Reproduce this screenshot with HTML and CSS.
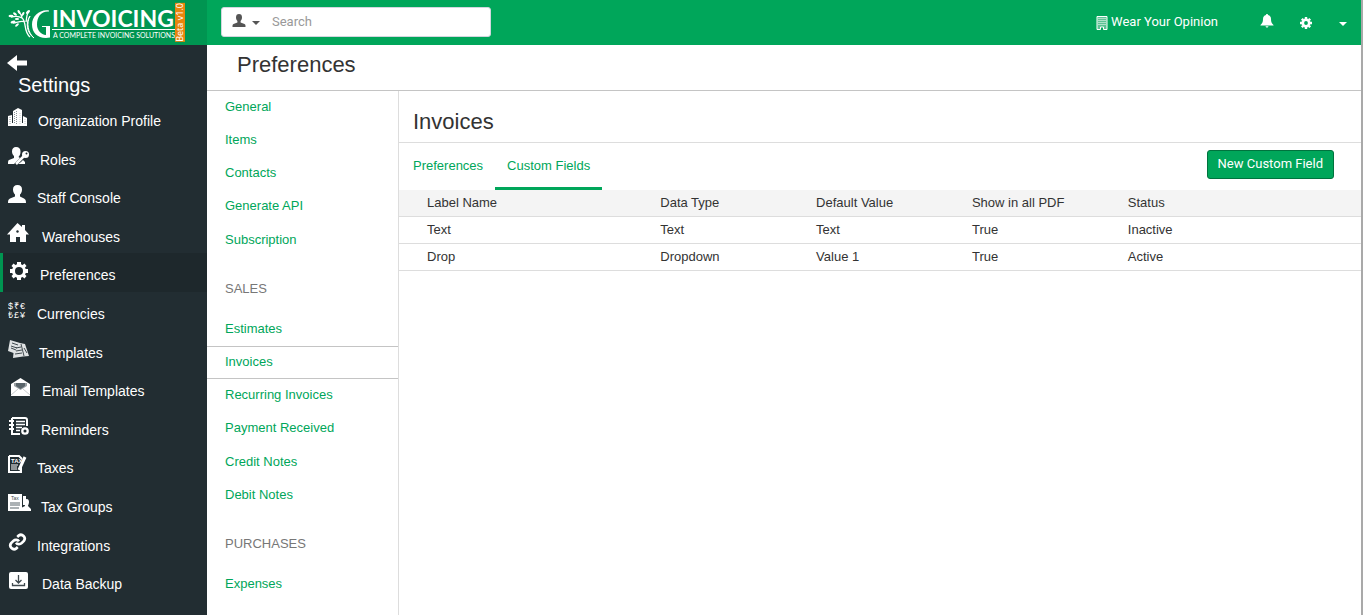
FILE: index.html
```html
<!DOCTYPE html>
<html lang="en">
<head>
  <meta charset="UTF-8">
  <meta name="viewport" content="width=device-width, initial-scale=1.0">
  <title>Preferences</title>
  <link rel="stylesheet" href="styles.css">
</head>
<body>
  <header class="header">
    <a href="#" class="logo">
      <svg class="logo-mark" width="44" height="34" viewBox="0 0 44 34" fill="none" stroke="#fff">
        <path d="M41 5.500C33 5 29 11 29 18.500c0 6 4 10 9 10.500v-8h-4v-1h8v11.500c-11 2-18-4-18-13C24 10 32 3 41 4.500z" fill="#fff" stroke="none"/>
        <path d="M22 10c-4 7-2 17 4 22-7-5-9-15-4-22z" fill="#fff" stroke-width="1"/>
        <path d="M22 31C15 25 19 16 14 12c-3-2-7-2-11-1M17 16c-4-2-8 1-12 1M14 12c0-3-1-4-3-6M18 16c1-4 0-6 2-9" stroke-width="1.300"/>
        <g fill="#fff" stroke="none">
          <ellipse cx="3" cy="10" rx="2.500" ry="1.200"/><ellipse cx="7" cy="8" rx="2.200" ry="1.100" transform="rotate(35 7 8)"/>
          <ellipse cx="11" cy="6" rx="2.200" ry="1.200" transform="rotate(60 11 6)"/><ellipse cx="15" cy="8" rx="2.200" ry="1.100" transform="rotate(-60 15 8)"/>
          <ellipse cx="5" cy="16" rx="2.500" ry="1.200" transform="rotate(-15 5 16)"/><ellipse cx="9" cy="19" rx="2.200" ry="1.100" transform="rotate(-40 9 19)"/>
          <ellipse cx="20" cy="6" rx="2.500" ry="1.300" transform="rotate(-45 20 6)"/><ellipse cx="9" cy="13" rx="2.200" ry="1"/>
        </g>
      </svg>
      <span class="logo-text">
        <span class="logo-name">INVOICING</span>
        <span class="logo-tag">A COMPLETE INVOICING SOLUTIONS</span>
      </span>
      <span class="beta">Beta v1.0</span>
    </a>
    <form class="search">
      <button type="button" class="search-type" aria-label="Search in contacts">
        <svg width="14" height="14" viewBox="0 0 14 14"><path d="M7 0C5 0 4 1 4 3.500c0 1.500.6 2.600 1.400 3.500v1.500L1.500 10C.5 10.500.5 11 .5 13h13c0-2 0-2.500-1-3L8.600 8.500V7C9.400 6.100 10 5 10 3.500 10 1 9 0 7 0z" fill="#555"/></svg>
        <span class="caret"></span>
      </button>
      <input type="text" class="search-input" placeholder="Search" aria-label="Search">
    </form>
    <nav class="top-menu">
      <a href="#" class="company">
        <svg width="12" height="14" viewBox="0 0 12 14"><path d="M1 .5h10v13H7.500V11h-3v2.500H1z" fill="#5cc394" stroke="#fff"/><path d="M3 2v8M5 2v8M7 2v8M9 2v8" stroke="#fff" stroke-dasharray="1 1"/></svg>
        <span>Wear Your Opinion</span>
      </a>
      <a href="#" class="bell" aria-label="Notifications">
        <svg width="14" height="14" viewBox="0 0 14 14"><path d="M7 0c-.7 0-1 .4-1 1C4 1.500 3 3 3 5c0 3-.7 4.500-2.500 6v.5h13V11C11.700 9.500 11 8 11 5c0-2-1-3.500-3-4 0-.6-.3-1-1-1zM5.500 12.300h3C8.300 13.300 7.700 13.500 7 13.500s-1.300-.2-1.500-1.200z" fill="#fff"/></svg>
      </a>
      <a href="#" class="cog" aria-label="Settings">
        <svg width="12" height="12" viewBox="0 0 12 12"><circle cx="6" cy="6" r="3.200" fill="none" stroke="#fff" stroke-width="2.600"/><path d="M6 0v2M6 10v2M0 6h2M10 6h2M1.800 1.800l1.400 1.400M8.800 8.800l1.400 1.400M10.200 1.800L8.800 3.200M3.200 8.800l-1.400 1.400" stroke="#fff" stroke-width="2.400"/></svg>
      </a>
      <a href="#" class="account" aria-label="Account"><span class="caret"></span></a>
    </nav>
  </header>

  <div class="wrapper">
    <aside class="sidebar">
      <a href="#" class="back" aria-label="Back">
        <svg width="20" height="16" viewBox="0 0 20 16"><path d="M0 8L10 0v5.500h10v5H10V16z" fill="#fff"/></svg>
      </a>
      <h2 class="sidebar-title">Settings</h2>
      <ul class="menu">
        <li><a href="#">
          <svg width="20" height="18" viewBox="0 0 20 18"><path d="M0 8l4-1v11H0zM5 3l5-3 4 2v16H5zM15 8l4 2v8h-4zM3 15h14v3H3z" fill="#fff"/><path d="M6.500 4v12M8.500 3v13M2 9v7" stroke="#8b9397" stroke-dasharray="1 1"/><path d="M12 5v11M17 11v5" stroke="#c4c9cb" stroke-dasharray="1 1"/></svg>
          <span>Organization Profile</span></a></li>
        <li><a href="#">
          <svg width="22" height="18" viewBox="0 0 22 18"><path d="M8 0C5.500 0 4 1.500 4 4.500 4 7 5 8 6 9v2l-5 2c-1 .6-1 2-1 4h6l6-6-1.500-1C12 8 12.500 7 12.500 4.500 12.500 1.500 11 0 8 0zM13 15l-3 2h7v-2l-2-2z" fill="#fff"/><circle cx="17.500" cy="7.500" r="3.500" fill="#fff"/><circle cx="18.500" cy="6.500" r="1" fill="#222d32"/><path d="M16 9l-8 8" stroke="#fff" stroke-width="2.500"/></svg>
          <span>Roles</span></a></li>
        <li><a href="#">
          <svg width="19" height="18" viewBox="0 0 19 18"><path d="M9.500 0C6.500 0 5 1.500 5 4.500 5 7 6 8.500 7 9.500v2L2 13.500c-1.500.7-2 2-2 4.500h18c0-2.500-.5-3.800-2-4.500l-4-2v-2c1-1 2-2.500 2-5C14 1.500 12.500 0 9.500 0z" fill="#fff"/></svg>
          <span>Staff Console</span></a></li>
        <li><a href="#">
          <svg class="icon-home" width="24" height="19" viewBox="0 0 24 19"><path d="M9.500-1L14 3V1h3v5l4 4.500h-3V18h-6v-5H8v5H2v-7.500H-1z" fill="#fff"/><circle cx="9.500" cy="7.500" r="1.200" fill="#222d32"/></svg>
          <span>Warehouses</span></a></li>
        <li class="active"><a href="#">
          <svg width="22" height="18" viewBox="0 0 22 18"><circle cx="11" cy="9" r="5.500" fill="none" stroke="#fff" stroke-width="3"/><path d="M9 0h4v3H9zM9 15h4v3H9zM2 7h3v4H2zM17 7h3v4h-3zM3.500 4l2-2.500L8 3.500 5.500 6zM18.500 4l-2-2.500L14 3.500 16.500 6zM3.500 14l2 2.500L8 14.500 5.500 12zM18.500 14l-2 2.500-2.500-2 2.500-2.500z" fill="#fff"/></svg>
          <span>Preferences</span></a></li>
        <li><a href="#">
          <svg class="icon-text" width="19" height="18" viewBox="0 0 19 18"><text x="0" y="8">$</text><text x="6" y="8">₹</text><text x="12" y="8">€</text><text x="0" y="17">₺</text><text x="6" y="17">£</text><text x="12" y="17">¥</text></svg>
          <span>Currencies</span></a></li>
        <li><a href="#">
          <svg width="21" height="18" viewBox="0 0 21 18"><path d="M2 0l10 3 5 1 4 12-6 .5L5 18l.5-5L0 11z" fill="#dfe2e3"/><path d="M4 3l6 2M3 6l6 2M3 8l5 2M8 8l5-1M8 11l6-1M7 14l7-1M13 4l3 12M16 8l3 5" stroke="#414b50" fill="none"/></svg>
          <span>Templates</span></a></li>
        <li><a href="#">
          <svg width="24" height="18" viewBox="0 0 24 18"><path d="M12.500 0L22 6v12H3V6z" fill="#fff"/><path d="M6 5h13v3l-6.500 4L6 8z" fill="#9aa1a4"/><path d="M8 5h9v3l-4.500 3L8 8z" fill="#59646a"/><path d="M3 17l7-6M22 17l-7-6" stroke="#c9cdcf"/></svg>
          <span>Email Templates</span></a></li>
        <li><a href="#">
          <svg width="23" height="18" viewBox="0 0 23 18"><path d="M4 1h13q2 0 2 2v6M4 1v16h8" fill="none" stroke="#fff" stroke-width="2"/><path d="M1 4h5M1 8h5M1 12h5" stroke="#fff" stroke-width="2"/><path d="M8 4.500h9M8 7.500h9M8 10.500h6M8 13.500h4" stroke="#fff" stroke-width="1.500"/><circle cx="17" cy="14" r="2.700" fill="none" stroke="#fff" stroke-width="2.300"/></svg>
          <span>Reminders</span></a></li>
        <li><a href="#">
          <svg class="icon-text tax" width="19" height="18" viewBox="0 0 19 18"><path d="M1 1h10l3 3M1 1v16h12v-5" fill="none" stroke="#fff" stroke-width="2"/><text x="3" y="8">TAX</text><path d="M3 10h7M3 12h6M3 14h6" stroke="#fff"/><path d="M17 2l-6 13" stroke="#fff" stroke-width="3"/></svg>
          <span>Taxes</span></a></li>
        <li><a href="#">
          <svg class="icon-text tax-dark" width="23" height="18" viewBox="0 0 23 18"><path d="M0 0h14v17H0zM15 2h3v9h-3z" fill="#fff"/><text x="3" y="6">Tax</text><path d="M2 9h10M2 11h10M2 14h9" stroke="#59646a"/><path d="M19 5c-2 0-3 1-3 3s1 3 1 4l-4 2v3h10v-2l-3-3c0-1 1-2 1-4s-1-3-2-3z" fill="#fff"/></svg>
          <span>Tax Groups</span></a></li>
        <li><a href="#">
          <svg width="19" height="18" viewBox="0 0 24 24" fill="none" stroke="#fff" stroke-width="3.600"><path d="M10 13a5 5 0 0 0 7.500.5l3-3a5 5 0 0 0-7-7l-1.800 1.700M14 11a5 5 0 0 0-7.500-.5l-3 3a5 5 0 0 0 7 7l1.800-1.700"/></svg>
          <span>Integrations</span></a></li>
        <li><a href="#">
          <svg width="24" height="18" viewBox="0 0 24 18"><rect x="1" y="1" width="19" height="17" rx="2" fill="#fff"/><path d="M10.500 4v8M7.500 9l3 3 3-3M4.500 12v2.500h12V12" fill="none" stroke="#414b50" stroke-width="1.300"/></svg>
          <span>Data Backup</span></a></li>
      </ul>
    </aside>

    <main class="content">
      <h1 class="page-title">Preferences</h1>
      <div class="columns">
        <nav class="subnav">
          <a href="#">General</a>
          <a href="#">Items</a>
          <a href="#">Contacts</a>
          <a href="#">Generate API</a>
          <a href="#">Subscription</a>
          <h4>SALES</h4>
          <a href="#">Estimates</a>
          <a href="#" class="active">Invoices</a>
          <a href="#">Recurring Invoices</a>
          <a href="#">Payment Received</a>
          <a href="#">Credit Notes</a>
          <a href="#">Debit Notes</a>
          <h4>PURCHASES</h4>
          <a href="#">Expenses</a>
        </nav>
        <section class="panel">
          <h2 class="panel-title">Invoices</h2>
          <div class="toolbar">
            <nav class="tabs">
              <a href="#">Preferences</a>
              <a href="#" class="active">Custom Fields</a>
            </nav>
            <button type="button" class="btn">New Custom Field</button>
          </div>
          <table class="fields">
            <thead>
              <tr><th>Label Name</th><th>Data Type</th><th>Default Value</th><th>Show in all PDF</th><th>Status</th></tr>
            </thead>
            <tbody>
              <tr><td>Text</td><td>Text</td><td>Text</td><td>True</td><td>Inactive</td></tr>
              <tr><td>Drop</td><td>Dropdown</td><td>Value 1</td><td>True</td><td>Active</td></tr>
            </tbody>
          </table>
        </section>
      </div>
    </main>
  </div>
</body>
</html>
```
FILE: styles.css
```css
* {
  box-sizing: border-box;
}
body {
  margin: 0;
  height: 100vh;
  display: flex;
  flex-direction: column;
  overflow: hidden;
  border-right: 2px solid #a9a9a9;
  font-family: "Liberation Sans", Arial, sans-serif;
  font-size: 13px;
  line-height: 1.4;
  color: #333;
}
a {
  color: #00a65a;
  text-decoration: none;
}
h1, h2, h4 {
  margin: 0;
  font-weight: 400;
}
svg {
  display: block;
  flex: none;
}

/* header */
.header {
  display: flex;
  align-items: center;
  height: 45px;
  flex: none;
  background-color: #00a65a;
}
.logo {
  display: flex;
  align-items: center;
  width: 207px;
  height: 45px;
  padding-left: 8px;
  background-color: #009551;
  color: #fff;
}
.logo-text {
  display: flex;
  flex-direction: column;
  font-family: Lato, sans-serif;
}
.logo-name {
  font-size: 23px;
  font-weight: 700;
  line-height: 22px;
  border-bottom: 1px solid #fff;
}
.logo-tag {
  padding: 1px 0 0 1px;
  font-size: 7px;
  line-height: 8px;
  white-space: nowrap;
}
.beta {
  background-color: #e8850c;
  font-family: "Noto Sans", sans-serif;
  font-size: 9px;
  line-height: 10px;
  writing-mode: vertical-rl;
  transform: rotate(180deg);
}
.search {
  display: flex;
  width: 270px;
  height: 30px;
  margin: 0 0 1px 14px;
  border: 1px solid #d2d6de;
  border-radius: 3px;
  background-color: #fff;
}
.search-type {
  display: flex;
  align-items: center;
  gap: 6px;
  padding: 0 10px 2px;
  border: none;
  background: none;
  color: #555;
}
.caret {
  margin-top: 3px;
  border-top: 4px solid;
  border-left: 4px solid transparent;
  border-right: 4px solid transparent;
}
.search-input {
  flex: 1;
  min-width: 0;
  padding: 0 2px 2px;
  border: none;
  outline: none;
  background: none;
  font-family: Roboto, sans-serif;
  font-size: 13px;
}
.search-input::placeholder {
  color: #999;
}
.top-menu {
  display: flex;
  align-items: center;
  margin-left: auto;
  padding-right: 14px;
}
.top-menu a {
  color: #fff;
}
.company {
  display: flex;
  align-items: center;
  gap: 3px;
  font-family: Roboto, sans-serif;
}
.bell {
  margin: 0 0 3px 42px;
}
.cog {
  margin-left: 26px;
}
.account {
  display: flex;
  margin-left: 27px;
}

/* sidebar */
.wrapper {
  display: flex;
  flex: 1;
  min-height: 0;
}
.sidebar {
  width: 207px;
  flex: none;
  background-color: #222d32;
  color: #fff;
}
.back {
  display: block;
  padding: 10px 7px 0;
}
.sidebar-title {
  padding-left: 18px;
  font-size: 20px;
}
.menu {
  margin: 0;
  padding: 0;
  list-style: none;
}
.menu a {
  display: flex;
  align-items: flex-start;
  gap: 10px;
  padding: 9px 8px 6px 5px;
  border-left: 3px solid transparent;
  color: #fff;
  font-size: 14px;
}
.menu span {
  padding-top: 4px;
}
.menu .active a {
  border-left-color: #009551;
  background-color: #1e282c;
}
.icon-home {
  overflow: visible;
}
.icon-text {
  fill: #fff;
  font-size: 9px;
}
.tax {
  font-size: 6px;
  font-weight: 700;
}
.tax-dark {
  fill: #414b50;
  font-size: 5px;
}

/* content */
.content {
  display: flex;
  flex-direction: column;
  flex: 1;
}
.page-title {
  padding: 5px 30px 9px;
  border-bottom: 1px solid #c4c4c4;
  font-size: 22px;
}
.columns {
  display: flex;
  flex: 1;
}
.subnav {
  width: 192px;
  flex: none;
  border-right: 1px solid #ddd;
}
.subnav a {
  display: block;
  padding: 7px 18px 8px;
}
.subnav .active {
  padding: 6px 18px 7px;
  border-top: 1px solid #c4c4c4;
  border-bottom: 1px solid #c4c4c4;
}
.subnav h4 {
  padding: 23px 18px 15px;
  font-size: 13px;
  color: #777;
}
.panel {
  flex: 1;
}
.panel-title {
  padding: 16px 14px 4px;
  border-bottom: 1px solid #ddd;
  font-size: 22px;
}
.toolbar {
  display: flex;
  justify-content: space-between;
  align-items: flex-start;
  padding: 0 27px 0 2px;
}
.tabs {
  display: flex;
}
.tabs a {
  padding: 14px 12px 12px;
  border-bottom: 3px solid transparent;
}
.tabs .active {
  border-bottom-color: #00a65a;
}
.btn {
  height: 29px;
  margin-top: 7px;
  padding: 0 10px 2px;
  border: 1px solid #00733e;
  border-radius: 3px;
  background-color: #00a65a;
  color: #fff;
  font-family: Roboto, sans-serif;
  font-size: 13px;
}
.fields {
  width: 100%;
  border-collapse: collapse;
  table-layout: fixed;
}
.fields th, .fields td {
  height: 27px;
  padding: 0 15px;
  border-bottom: 1px solid #ddd;
  font-weight: 400;
  text-align: left;
}
.fields th {
  width: 16.2%;
  background-color: #f4f4f4;
}
.fields th:first-child, .fields td:first-child {
  width: 25.6%;
  padding-left: 28px;
}
.fields th:last-child {
  width: auto;
}
```
